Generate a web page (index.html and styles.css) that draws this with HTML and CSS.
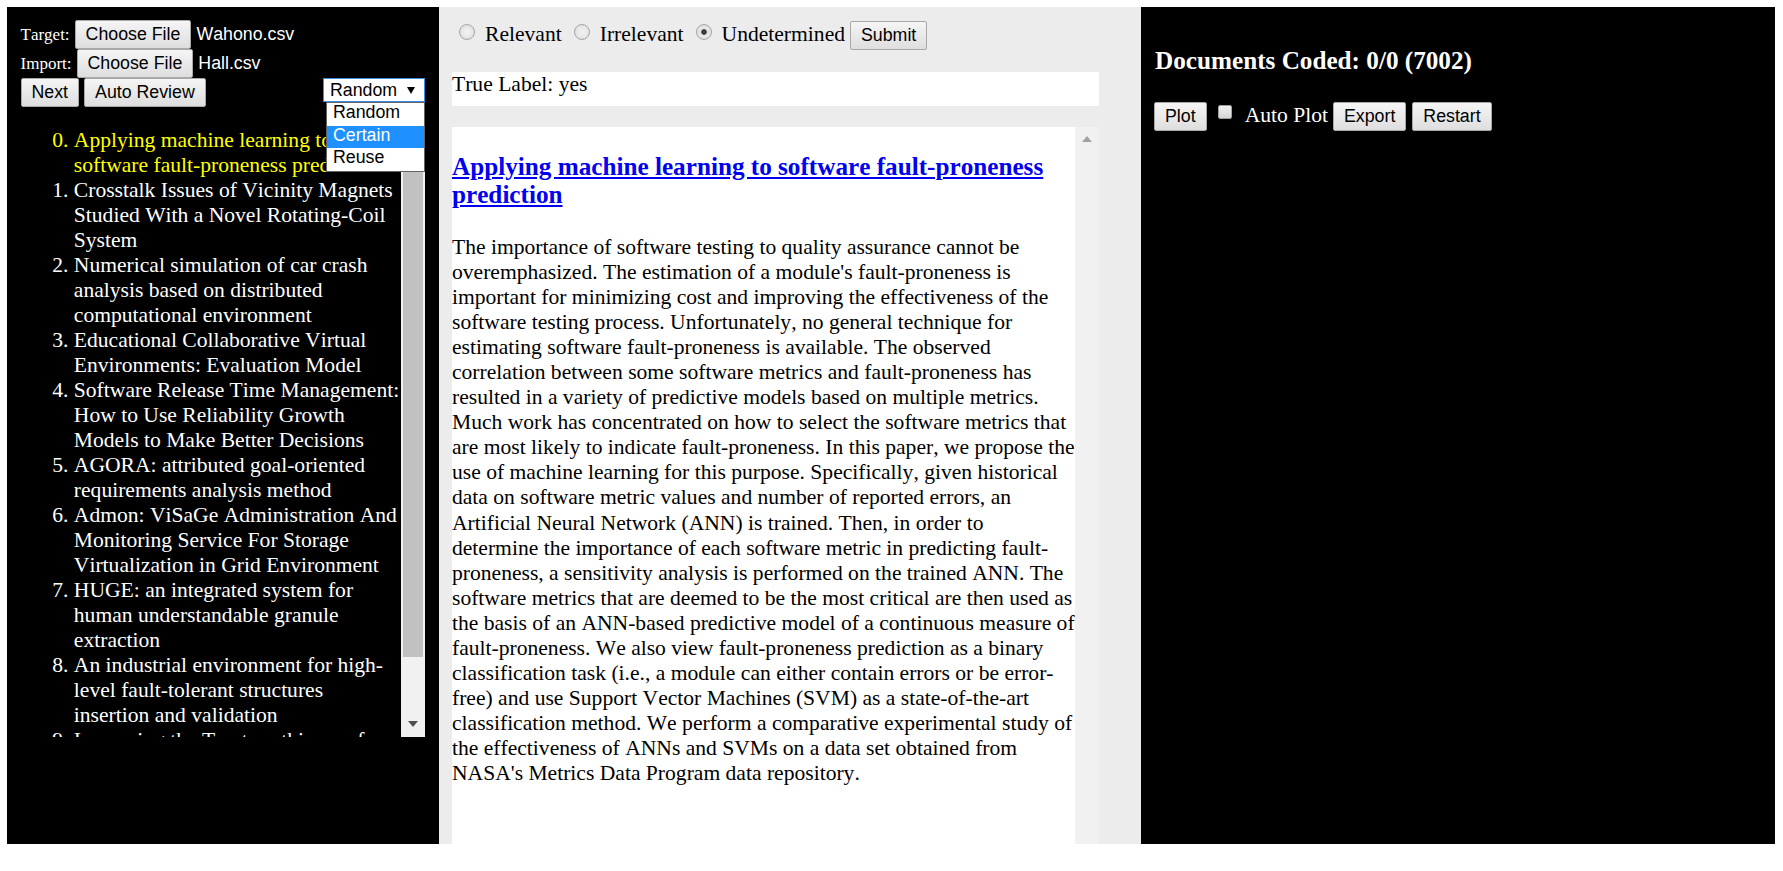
FILE: index.html
```html
<!DOCTYPE html>
<html>
<head>
<meta charset="utf-8">
<title>Review</title>
<link rel="stylesheet" href="styles.css">
</head>
<body>
<div class="app">
  <div class="panel left">
    <div class="filerow"><span class="flabel">Target:</span><button class="btn">Choose File</button><span class="fname">Wahono.csv</span></div>
    <div class="filerow"><span class="flabel">Import:</span><button class="btn">Choose File</button><span class="fname">Hall.csv</span></div>
    <div class="ctrlrow">
      <button class="btn gap">Next</button><button class="btn">Auto Review</button>
      <div class="select-wrap">
        <div class="select"><span>Random</span><span class="caret"></span></div>
        <ul class="options">
          <li>Random</li>
          <li class="hl">Certain</li>
          <li>Reuse</li>
        </ul>
      </div>
    </div>
    <div class="listbox">
      <div class="listview">
        <ol start="0" class="doclist">
          <li class="current">Applying machine learning to software fault-proneness prediction</li>
          <li>Crosstalk Issues of Vicinity Magnets Studied With a Novel Rotating-Coil System</li>
          <li>Numerical simulation of car crash analysis based on distributed computational environment</li>
          <li>Educational Collaborative Virtual Environments: Evaluation Model</li>
          <li>Software Release Time Management: How to Use Reliability Growth Models to Make Better Decisions</li>
          <li>AGORA: attributed goal-oriented requirements analysis method</li>
          <li>Admon: ViSaGe Administration And Monitoring Service For Storage Virtualization in Grid Environment</li>
          <li>HUGE: an integrated system for human understandable granule extraction</li>
          <li>An industrial environment for high-level fault-tolerant structures insertion and validation</li>
          <li>Improving the Trustworthiness of Software Systems</li>
        </ol>
      </div>
      <div class="vscroll">
        <div class="sbtn"><span class="tri-up dark"></span></div>
        <div class="track"><div class="thumb"></div></div>
        <div class="sbtn down"><span class="tri-down dark"></span></div>
      </div>
    </div>
  </div>

  <div class="panel mid">
    <div class="radiorow">
      <input type="radio" name="lab" class="radio first">
      <span class="rlabel">Relevant</span>
      <input type="radio" name="lab" class="radio">
      <span class="rlabel">Irrelevant</span>
      <input type="radio" name="lab" class="radio" checked>
      <span class="rlabel">Undetermined</span>
      <button class="btn submit">Submit</button>
    </div>
    <div class="truelabel">True Label: yes</div>
    <div class="docbox">
      <div class="doccontent">
        <h3 class="doctitle"><a href="#">Applying machine learning to software fault-proneness prediction</a></h3>
        <p class="abstract">The importance of software testing to quality assurance cannot be overemphasized. The estimation of a module's fault-proneness is important for minimizing cost and improving the effectiveness of the software testing process. Unfortunately, no general technique for estimating software fault-proneness is available. The observed correlation between some software metrics and fault-proneness has resulted in a variety of predictive models based on multiple metrics. Much work has concentrated on how to select the software metrics that are most likely to indicate fault-proneness. In this paper, we propose the use of machine learning for this purpose. Specifically, given historical data on software metric values and number of reported errors, an Artificial Neural Network (ANN) is trained. Then, in order to determine the importance of each software metric in predicting fault-proneness, a sensitivity analysis is performed on the trained ANN. The software metrics that are deemed to be the most critical are then used as the basis of an ANN-based predictive model of a continuous measure of fault-proneness. We also view fault-proneness prediction as a binary classification task (i.e., a module can either contain errors or be error-free) and use Support Vector Machines (SVM) as a state-of-the-art classification method. We perform a comparative experimental study of the effectiveness of ANNs and SVMs on a data set obtained from NASA's Metrics Data Program data repository.</p>
      </div>
      <div class="docscroll">
        <div class="sbtn"><span class="tri-up light"></span></div>
        <div class="sbtn down"><span class="tri-down light"></span></div>
      </div>
    </div>
  </div>

  <div class="panel right">
    <h3 class="coded">Documents Coded: 0/0 (7002)</h3>
    <div class="plotrow">
      <button class="btn">Plot</button>
      <input type="checkbox" class="check">
      <span class="autoplot">Auto Plot</span>
      <button class="btn export">Export</button>
      <button class="btn restart">Restart</button>
    </div>
  </div>
</div>
</body>
</html>
```

FILE: styles.css
```css
html, body {
  padding: 0;
}
body {
  margin: 7px 8px 0 7px;
  background: #fff;
  font-family: "Liberation Serif", "Times New Roman", serif;
  font-size: 21.583px;
  line-height: 25px;
  font-kerning: none;
  font-variant-ligatures: none;
  color: #000;
}

.app {
  display: flex;
  height: 837px;
}
.panel {
  box-sizing: border-box;
  height: 837px;
}

/* ---------- buttons ---------- */
.btn {
  box-sizing: border-box;
  height: 29px;
  margin: 0;
  padding: 0 10px;
  border: 1px solid #a8a8a8;
  border-radius: 2px;
  background: linear-gradient(#f5f5f5, #dedede);
  color: #000;
  font-family: "Liberation Sans", Arial, sans-serif;
  font-size: 17.78px;
  line-height: 27px;
  white-space: nowrap;
}

/* ---------- left panel ---------- */
.left {
  width: 432px;
  background: #000;
  color: #fff;
  padding: 13px 14px 0 13.5px;
}
.filerow {
  display: flex;
  align-items: baseline;
  height: 29px;
}
.flabel {
  font-size: 17px;
  line-height: 20px;
  margin-right: 5px;
}
.fname {
  margin-left: 5px;
  font-family: "Liberation Sans", Arial, sans-serif;
  font-size: 17.78px;
  line-height: 20px;
}
.ctrlrow {
  display: flex;
  align-items: flex-start;
  height: 29px;
}
.btn.gap {
  margin-right: 5px;
}
.select-wrap {
  position: relative;
  margin-left: auto;
  width: 102px;
}
.select {
  box-sizing: border-box;
  height: 24px;
  border: 1px solid #3b8de0;
  background: #fff;
  color: #000;
  display: flex;
  align-items: center;
  justify-content: space-between;
  padding: 0 9px 0 6px;
  font-family: "Liberation Sans", Arial, sans-serif;
  font-size: 17.78px;
  line-height: 20px;
}
.caret {
  width: 0;
  height: 0;
  border-left: 4px solid transparent;
  border-right: 4px solid transparent;
  border-top: 7px solid #000;
}
.options {
  position: absolute;
  left: 3px;
  top: 24px;
  z-index: 5;
  box-sizing: border-box;
  width: 99px;
  margin: 0;
  padding: 0;
  list-style: none;
  background: #fff;
  border: 1px solid #646464;
  font-family: "Liberation Sans", Arial, sans-serif;
  font-size: 17.78px;
  color: #000;
}
.options li {
  height: 22.5px;
  line-height: 18px;
  padding-left: 6px;
}
.options li.hl {
  background: #1e90ff;
  color: #fff;
}

.listbox {
  display: flex;
  height: 630px;
}
.listview {
  flex: 1;
  overflow: hidden;
}
.doclist {
  margin: 21.33px 0 0;
  padding-left: 53.33px;
}
.doclist li {
  line-height: 25px;
}
.doclist li.current {
  color: #ffff00;
}

/* fake scrollbars */
.vscroll, .docscroll {
  width: 24px;
  background: #f1f1f1;
  display: flex;
  flex-direction: column;
  justify-content: space-between;
}
.sbtn {
  height: 23px;
  display: flex;
  align-items: center;
  justify-content: center;
  flex: none;
}
.sbtn.down {
  height: 27px;
}
.track {
  flex: 1;
  padding: 0 2px;
}
.thumb {
  height: 527px;
  background: #c1c1c1;
}
.tri-up, .tri-down {
  width: 0;
  height: 0;
  border-left: 5.5px solid transparent;
  border-right: 5.5px solid transparent;
}
.tri-up.dark { border-bottom: 6px solid #505050; }
.tri-down.dark { border-top: 6px solid #505050; }
.tri-up.light { border-bottom: 6px solid #a3a3a3; }
.tri-down.light { border-top: 6px solid #a3a3a3; }

/* ---------- middle panel ---------- */
.mid {
  width: 702px;
  background: #ececec;
  padding: 14px 0 0 13px;
}
.radiorow {
  display: flex;
  align-items: baseline;
  height: 29px;
}
.radio {
  appearance: none;
  -webkit-appearance: none;
  box-sizing: border-box;
  align-self: flex-start;
  width: 16px;
  height: 16px;
  margin: 3px 10px 0 12px;
  border: 1px solid #a6a6a6;
  border-radius: 50%;
  background: radial-gradient(circle, #f4f4f4 0, #e2e2e2 70%, #d6d6d6 100%);
}
.radio.first {
  margin-left: 7px;
}
.radio:checked {
  background: radial-gradient(circle, #3a3a3a 0, #3a3a3a 2.4px, #e8e8e8 3.2px, #dadada 100%);
}
.rlabel {
  line-height: 25px;
}
.btn.submit {
  margin-left: 5px;
}
.truelabel {
  box-sizing: border-box;
  width: 647px;
  height: 34px;
  margin-top: 22px;
  background: #fff;
  line-height: 25px;
}
.docbox {
  display: flex;
  width: 647px;
  height: 742px;
  margin-top: 21px;
  background: #fff;
}
.doccontent {
  flex: 1;
  overflow: hidden;
}
.doctitle {
  margin: 25.5px 0 25.5px;
  font-size: 25.2px;
  line-height: 28.5px;
  font-weight: bold;
}
.doctitle a {
  color: #0000ee;
  text-decoration: underline;
}
.abstract {
  margin: 0;
  line-height: 25.05px;
}

/* ---------- right panel ---------- */
.right {
  flex: 1;
  background: #000;
  color: #fff;
  padding: 13.33px 13px 0;
}
.coded {
  margin: 26.3px 0 26.7px 1px;
  font-size: 25.2px;
  line-height: 28.5px;
  font-weight: bold;
}
.plotrow {
  display: flex;
  align-items: baseline;
}
.check {
  appearance: none;
  -webkit-appearance: none;
  box-sizing: border-box;
  align-self: flex-start;
  width: 14px;
  height: 14px;
  margin: 3px 13px 0 11px;
  border: 1px solid #a0a0a0;
  border-radius: 2px;
  background: linear-gradient(#f2f2f2, #d6d6d6);
}
.autoplot {
  line-height: 25px;
}
.btn.export {
  margin-left: 5px;
}
.btn.restart {
  margin-left: 6px;
}
```
